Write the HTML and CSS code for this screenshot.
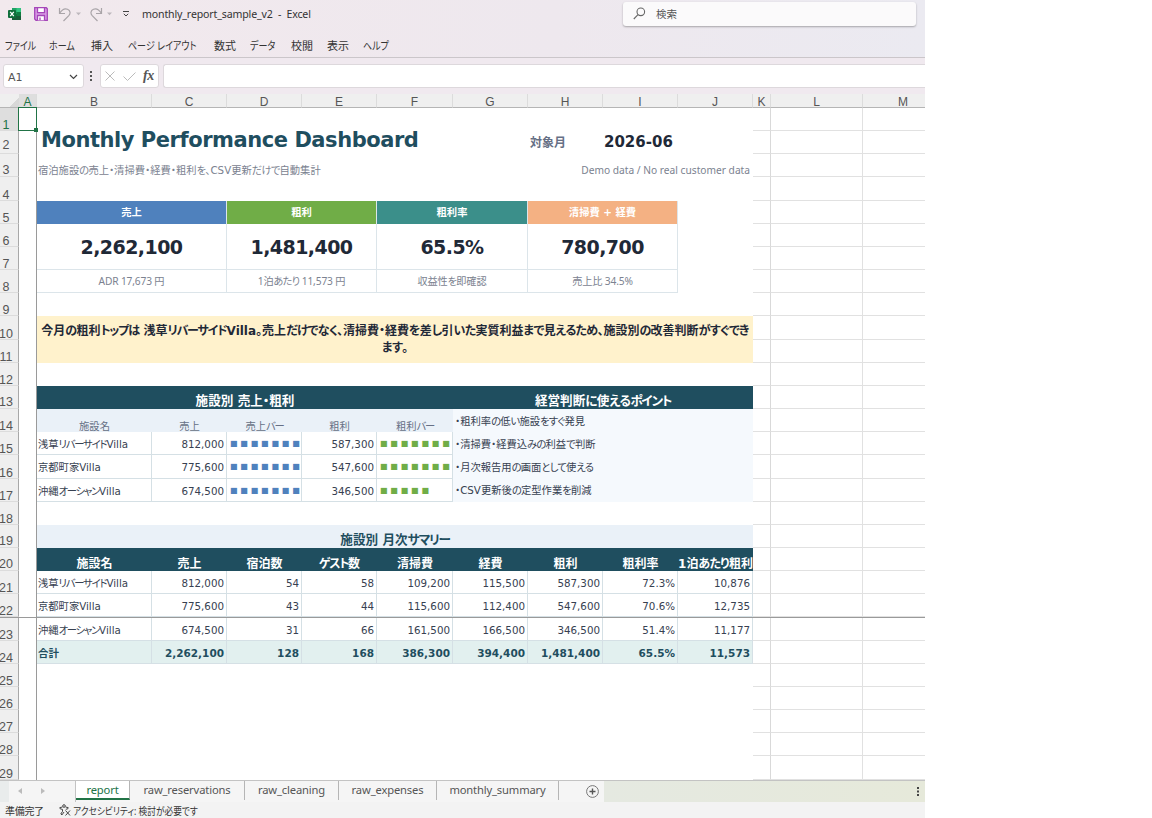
FILE: index.html
```html
<!DOCTYPE html>
<html lang="ja">
<head>
    <meta charset="UTF-8">
    <meta name="viewport" content="width=device-width, initial-scale=1.0">
    <title>monthly_report_sample_v2 - Excel</title>
    <link rel="stylesheet" href="styles.css">
</head>
<body>
    <div class="app">
        <header class="ribbon">
            <div class="title-bar">
                <div class="quick-access">
                    <svg class="icon-excel" width="14" height="14" viewBox="0 0 14 14">
                        <path d="M4 1h9v12H4z" fill="#21a366"/>
                        <path d="M8.500 1H13v4H8.500z" fill="#33c481"/>
                        <path d="M4 7h9v6H4z" fill="#185c37"/>
                        <path d="M8.500 5H13v4H8.500z" fill="#107c41"/>
                        <rect x="0" y="3" width="8" height="8" rx="1" fill="#0f6e3a"/>
                        <path d="M2.200 4.800l3.600 4.400M5.800 4.800L2.200 9.200" stroke="#fff" stroke-width="1.300"/>
                    </svg>
                    <svg class="icon-save" width="14" height="14" viewBox="0 0 14 14" fill="none" stroke="#a546b8" stroke-width="1.300">
                        <path d="M.7.700h11.600l1 1v11.600H2L.7 12z" fill="#d99be6"/>
                        <path d="M3.500.700h7v5h-7z" fill="#fff"/>
                        <path d="M3.500 13.300V8.500h7v4.800" fill="#fff"/>
                        <path d="M6 13v-2.500"/>
                    </svg>
                    <svg class="icon-undo" width="14" height="15" viewBox="0 0 14 15" fill="none" stroke="#a9a4a8" stroke-width="1.200">
                        <path d="M1.500 1v5.500H7M1.700 6.200C4 2.500 7 1.200 9.500 2.200c3 1.200 3.200 4.500 1.300 6.500L5.500 14"/>
                    </svg>
                    <svg class="icon-drop" width="5" height="4" viewBox="0 0 5 4" fill="#bdb7bc"><path d="M0 .5h5L2.500 3.300z"/></svg>
                    <svg class="icon-redo" width="14" height="15" viewBox="0 0 14 15" fill="none" stroke="#a9a4a8" stroke-width="1.200">
                        <path d="M12.500 1v5.500H7M12.300 6.200C10 2.500 7 1.200 4.500 2.200c-3 1.200-3.200 4.500-1.300 6.500L8.500 14"/>
                    </svg>
                    <svg class="icon-drop" width="5" height="4" viewBox="0 0 5 4" fill="#bdb7bc"><path d="M0 .5h5L2.500 3.300z"/></svg>
                    <svg class="icon-more" width="6" height="6" viewBox="0 0 6 6" fill="none" stroke="#444"><path d="M0 .5h6M.8 2.800L3 5l2.200-2.200"/></svg>
                </div>
                <span class="file-name">monthly_report_sample_v2&nbsp; -&nbsp; Excel</span>
                <div class="search-box">
                    <svg width="13" height="13" viewBox="0 0 13 13" fill="none" stroke="#666" stroke-width="1.100">
                        <circle cx="7.800" cy="4.800" r="3.800"/><path d="M5 7.600L.8 12"/>
                    </svg>
                    <span>検索</span>
                </div>
            </div>
            <nav class="menu">
                <span class="menu-file narrow">ファイル</span>
                <span class="menu-home narrow">ホーム</span>
                <span class="menu-insert">挿入</span>
                <span class="menu-layout narrow">ページ レイアウト</span>
                <span class="menu-formula">数式</span>
                <span class="menu-data narrow">データ</span>
                <span class="menu-review">校閲</span>
                <span class="menu-view">表示</span>
                <span class="menu-help narrow">ヘルプ</span>
            </nav>
        </header>

        <div class="formula-bar">
            <div class="name-box">
                <span>A1</span>
                <svg width="9" height="6" viewBox="0 0 9 6" fill="none" stroke="#444" stroke-width="1.200"><path d="M1 1l3.500 3.500L8 1"/></svg>
            </div>
            <svg class="icon-dots" width="2" height="10" viewBox="0 0 2 10" fill="#555"><path d="M0 0h2v2H0zM0 4h2v2H0zM0 8h2v2H0z"/></svg>
            <div class="fx-box">
                <svg width="10" height="10" viewBox="0 0 10 10" fill="none" stroke="#bbb"><path d="M.5.500l9 9M9.500.500l-9 9"/></svg>
                <svg width="13" height="9" viewBox="0 0 13 9" fill="none" stroke="#bbb"><path d="M.5 4.500l4 4L12.500.500"/></svg>
                <span class="fx">fx</span>
            </div>
            <div class="formula-input"></div>
        </div>

        <main class="sheet" id="sheet"></main>

        <footer>
            <div class="tab-bar">
                <div class="tab-nav">
                    <svg width="4" height="6" viewBox="0 0 4 6" fill="#bbb"><path d="M4 0v6L0 3z"/></svg>
                    <svg width="4" height="6" viewBox="0 0 4 6" fill="#bbb"><path d="M0 0v6l4-3z"/></svg>
                </div>
                <div class="tab tab-report active">report</div>
                <div class="tab tab-reservations">raw_reservations</div>
                <div class="tab tab-cleaning">raw_cleaning</div>
                <div class="tab tab-expenses">raw_expenses</div>
                <div class="tab tab-summary">monthly_summary</div>
                <div class="tab-add">
                    <svg width="13" height="13" viewBox="0 0 13 13" fill="none" stroke="#777"><circle cx="6.500" cy="6.500" r="5.900"/><path d="M6.500 3.500v6M3.500 6.500h6" stroke="#555" stroke-width="1.400"/></svg>
                </div>
                <div class="tab-fill">
                    <svg width="2" height="9" viewBox="0 0 2 9" fill="#444"><path d="M0 0h2v2H0zM0 3.500h2v2H0zM0 7h2v2H0z"/></svg>
                </div>
            </div>
            <div class="status-bar">
                <span class="status-ready">準備完了</span>
                <svg width="12" height="12" viewBox="0 0 12 12" fill="none" stroke="#444">
                    <circle cx="5" cy="2" r="1.300"/>
                    <path d="M3.500 3L.8 3.600l.4 1.200 2.300.6v2L1.800 10l1.200.900 2-2.900M6.500 3l2.700.600-.4 1.200-2 .5M6.500 6.500l4.500 5M11 6.500l-4.500 5"/>
                </svg>
                <span class="status-access">アクセシビリティ: 検討が必要です</span>
            </div>
        </footer>
    </div>

    <script src="sheet.js"></script>
</body>
</html>
```

FILE: sheet.js
```js
const sheet = document.getElementById('sheet');
const columns = 'ABCDEFGHIJKLM';
const rowCount = 29;

// grid line 1 is the row/column header
function place(el, range) {
    const [from, to = from] = range.split(':');
    const c1 = columns.indexOf(from[0]) + 2;
    const c2 = columns.indexOf(to[0]) + 3;
    const r1 = Number(from.slice(1)) + 1;
    const r2 = Number(to.slice(1)) + 2;
    el.style.gridArea = `${r1} / ${c1} / ${r2} / ${c2}`;
}

// kana are set tighter than kanji
function tightenKana(text) {
    return text
        .replace(/[\u3041-\u3096]+/g, '<span class="hiragana">$&</span>')
        .replace(/[\u30a1-\u30fa\u30fc]+/g, '<span class="katakana">$&</span>');
}

function addCell(range, className, text = '') {
    const el = document.createElement('div');
    el.className = 'cell ' + className;
    const span = document.createElement('span');
    span.innerHTML = tightenKana(text);
    el.appendChild(span);
    place(el, range);
    sheet.appendChild(el);
}

function addHeader(className, text, row, col) {
    const el = document.createElement('div');
    el.className = className;
    el.textContent = text;
    el.style.gridArea = `${row} / ${col}`;
    sheet.appendChild(el);
}

// headers
addHeader('corner', '', 1, 1);
[...columns].forEach((c, i) => addHeader('col-head col-' + c, c, 1, i + 2));
for (let r = 1; r <= rowCount; r++) {
    addHeader('row-head row-' + r, r, r + 1, 1);
    ['K', 'L', 'M'].forEach(c => addCell(c + r, 'gridline grid-' + c));
}

// title
addCell('B2:G2', 'title', 'Monthly Performance Dashboard');
addCell('H2', 'month-label', '対象月');
addCell('I2', 'month', '2026-06');
addCell('B3:F3', 'subtitle', '宿泊施設の売上・清掃費・経費・粗利を、CSV更新だけで自動集計');
addCell('G3:J3', 'note', 'Demo data / No real customer data');

// KPI cards
const cards = [
    ['B', 'C', 'blue', '売上', '2,262,100', 'ADR 17,673 円'],
    ['D', 'E', 'green', '粗利', '1,481,400', '1泊あたり 11,573 円'],
    ['F', 'G', 'teal', '粗利率', '65.5%', '収益性を即確認'],
    ['H', 'I', 'orange', '清掃費 + 経費', '780,700', '売上比 34.5%']
];
cards.forEach(([a, b, color, label, value, sub]) => {
    addCell(`${a}5:${b}5`, 'kpi-label ' + color, label);
    addCell(`${a}6:${b}7`, 'kpi-value', value);
    addCell(`${a}8:${b}8`, 'kpi-sub', sub);
});

addCell('B10:J11', 'banner', '今月の粗利トップは 浅草リバーサイドVilla。売上だけでなく、清掃費・経費を差し引いた実質利益まで見えるため、施設別の改善判断がすぐでき<br>ます。');

// sales and profit bars
addCell('B13:F13', 'section dark', '施設別 売上・粗利');
addCell('G13:J13', 'section dark', '経営判断に使えるポイント');
['施設名', '売上', '売上バー', '粗利', '粗利バー'].forEach((t, i) => addCell('BCDEF'[i] + '14', 'sub-head', t));
const bars = [
    ['浅草リバーサイドVilla', '812,000', 7, '587,300', 7],
    ['京都町家Villa', '775,600', 7, '547,600', 7],
    ['沖縄オーシャンVilla', '674,500', 7, '346,500', 5]
];
bars.forEach(([name, sales, salesBar, profit, profitBar], i) => {
    const r = 15 + i;
    addCell('B' + r, 'data name', name);
    addCell('C' + r, 'data number', sales);
    addCell('D' + r, 'data bar bar-blue', '■'.repeat(salesBar));
    addCell('E' + r, 'data number', profit);
    addCell('F' + r, 'data bar bar-green', '■'.repeat(profitBar));
});
['・粗利率の低い施設をすぐ発見', '・清掃費・経費込みの利益で判断', '・月次報告用の画面として使える', '・CSV更新後の定型作業を削減']
    .forEach((t, i) => addCell(`G${14 + i}:J${14 + i}`, 'point', t));

// monthly summary
addCell('B19:J19', 'section light', '施設別 月次サマリー');
['施設名', '売上', '宿泊数', 'ゲスト数', '清掃費', '経費', '粗利', '粗利率', '1泊あたり粗利']
    .forEach((t, i) => addCell('BCDEFGHIJ'[i] + '20', 'table-head', t));
const summary = [
    ['浅草リバーサイドVilla', '812,000', '54', '58', '109,200', '115,500', '587,300', '72.3%', '10,876'],
    ['京都町家Villa', '775,600', '43', '44', '115,600', '112,400', '547,600', '70.6%', '12,735'],
    ['沖縄オーシャンVilla', '674,500', '31', '66', '161,500', '166,500', '346,500', '51.4%', '11,177'],
    ['合計', '2,262,100', '128', '168', '386,300', '394,400', '1,481,400', '65.5%', '11,573']
];
summary.forEach((row, i) => {
    const total = i === 3 ? ' total' : '';
    row.forEach((t, j) => addCell('BCDEFGHIJ'[j] + (21 + i), 'data ' + (j ? 'number' : 'name') + total, t));
});

// frozen panes and selection
addCell('A1:A29', 'freeze-col');
const freezeRow = document.createElement('div');
freezeRow.className = 'freeze-row';
sheet.appendChild(freezeRow);
addCell('A1', 'selected');
```

FILE: styles.css
```css
* {
    box-sizing: border-box;
}
body {
    margin: 0;
    background-color: #fff;
    font-family: "Noto Sans", "Noto Sans CJK JP", sans-serif;
    font-size: 11px;
    color: #333;
    font-feature-settings: "palt";
    overflow: hidden;
}
svg {
    display: block;
    flex: none;
}
.app {
    width: 925px;
    height: 818px;
    overflow: hidden;
    white-space: nowrap;
}

/* ribbon */
.ribbon {
    height: 58px;
    background: linear-gradient(90deg, #f2e9ed, #eee8ee 60%, #ebeaf1);
    border-bottom: 1px solid #cbc6ca;
}
.title-bar {
    display: flex;
    align-items: center;
    height: 28px;
}
.quick-access {
    display: flex;
    align-items: center;
    width: 142px;
    padding-left: 8px;
}
.icon-save {
    margin-left: 12px;
}
.icon-undo {
    margin-left: 10px;
}
.icon-drop {
    margin-left: 4px;
}
.icon-redo {
    margin-left: 8px;
}
.icon-more {
    margin-left: 11px;
}
.file-name {
    width: 481px;
    font-size: 10.6px;
    letter-spacing: -0.15px;
}
.search-box {
    display: flex;
    align-items: center;
    gap: 10px;
    width: 293px;
    height: 24px;
    padding: 0 0 2px 10px;
    background-color: #fbfafb;
    border-radius: 3px;
    box-shadow: 0 1px 2px rgba(0, 0, 0, 0.3);
    font-size: 10.5px;
    color: #555;
}
.menu {
    display: flex;
    align-items: center;
    height: 34px;
    padding-left: 5px;
    font-size: 11px;
}
.menu span {
    flex: none;
}
.menu-file { width: 44px; }
.menu-home { width: 42px; }
.menu-insert { width: 37px; }
.menu-layout { width: 86px; }
.menu-formula { width: 36px; }
.menu-data { width: 41px; }
.menu-review { width: 36px; }
.menu-view { width: 36px; }
.narrow {
    transform: scaleX(0.82);
    transform-origin: left;
}

/* formula bar */
.formula-bar {
    display: flex;
    height: 36px;
    padding: 6px 0 6px 3px;
    background-color: #f0e9ef;
}
.name-box, .fx-box, .formula-input {
    height: 24px;
    background-color: #fff;
    border: 1px solid #ddd8dc;
    border-radius: 3px;
}
.name-box {
    display: flex;
    align-items: center;
    justify-content: space-between;
    width: 81px;
    padding: 2px 5px 0 4px;
    font-family: "DejaVu Sans", sans-serif;
    font-size: 11px;
    color: #555;
}
.icon-dots {
    margin: 7px 8px 0 6px;
}
.fx-box {
    display: flex;
    align-items: center;
    gap: 8px;
    width: 59px;
    padding-left: 4px;
}
.fx {
    margin-left: -1px;
    font: italic bold 14px "Liberation Serif", serif;
    color: #555;
    letter-spacing: -0.5px;
}
.formula-input {
    flex: 1;
    margin-left: 4px;
    border-right: none;
    border-radius: 3px 0 0 3px;
}

/* sheet */
.sheet {
    position: relative;
    display: grid;
    grid-template-columns: 19px 18px 115px 75px 75px 75px 76px 75px 75px 75px 75px 18px 92px 62px;
    grid-template-rows: 14px repeat(29, 23.17px);
    height: 686px;
    overflow: hidden;
}
.corner {
    background: linear-gradient(135deg, #efefef 70%, #d8d8d8 70%);
    border-bottom: 1px solid #b5b5b5;
}
.col-head, .row-head {
    font-family: "Liberation Sans", Arial, sans-serif;
    font-size: 12px;
    color: #555;
    background-color: #efefef;
}
.col-head {
    line-height: 16px;
    text-align: center;
    border-right: 1px solid #dcdcdc;
    border-bottom: 1px solid #b5b5b5;
}
.col-A {
    background-color: #dedede;
    color: #217346;
    border-bottom-color: #217346;
}
.col-M {
    padding-left: 18px;
    border-right: none;
}
.row-head {
    display: flex;
    align-items: flex-end;
    justify-content: center;
    padding-right: 6px;
    line-height: 10px;
    font-size: 12.5px;
    border-right: 1px solid #a8a8a8;
    border-bottom: 1px solid #dcdcdc;
}
.row-1 {
    background-color: #dedede;
    color: #217346;
}
.row-2 {
    padding-bottom: 3px;
}
.row-3, .row-13, .row-19, .row-20 {
    padding-bottom: 1px;
}
.cell {
    display: flex;
    align-items: center;
    min-width: 0;
    font-family: "DejaVu Sans", "Noto Sans CJK JP", sans-serif;
    font-size: 10.3px;
    line-height: 14px;
}
.hiragana {
    letter-spacing: -0.75px;
}
.katakana {
    letter-spacing: -1.2px;
}
.gridline {
    border-right: 1px solid #e1e1e1;
    border-bottom: 1px solid #e1e1e1;
}
.grid-K {
    border-right-color: #d9d9d9;
}
.grid-M {
    border-right: none;
}
.title {
    padding-left: 4px;
    padding-bottom: 5px;
    font-size: 21px;
    font-weight: bold;
    letter-spacing: -0.45px;
    color: #1f4e5f;
}
.month-label {
    justify-content: flex-start;
    padding-left: 2px;
    font-size: 12px;
    font-weight: bold;
    color: #667085;
}
.month {
    padding-left: 1px;
    padding-bottom: 2px;
    font-size: 15px;
    font-weight: bold;
    color: #1f2937;
}
.subtitle, .note {
    padding-top: 9px;
    color: #7b8290;
}
.subtitle {
    padding-left: 1px;
}
.note {
    justify-content: flex-end;
    padding-right: 3px;
    font-family: "Noto Sans", sans-serif;
    font-size: 10.2px;
}
.kpi-label, .kpi-value, .kpi-sub {
    justify-content: center;
    border-right: 1px solid #dce5ea;
}
.kpi-label {
    font-weight: bold;
    color: #fff;
}
.blue { background-color: #4f81bd; }
.green { background-color: #70ad47; }
.teal { background-color: #3b8f8a; }
.orange { background-color: #f4b183; }
.kpi-value {
    padding-top: 2px;
    font-size: 19px;
    font-weight: bold;
    letter-spacing: -0.55px;
    color: #1f2937;
    border-bottom: 1px solid #dce5ea;
}
.kpi-sub {
    font-family: "Noto Sans", "Noto Sans CJK JP", sans-serif;
    font-size: 10.2px;
    letter-spacing: -0.15px;
    color: #7b8290;
    border-bottom: 1px solid #dce5ea;
}
.banner {
    justify-content: center;
    text-align: center;
    background-color: #fff2cc;
    font-size: 12px;
    font-weight: bold;
    line-height: 16.5px;
    color: #1f2937;
}
.section {
    justify-content: center;
    padding-top: 8px;
    font-size: 12.6px;
    font-weight: bold;
}
.dark, .table-head {
    background-color: #1f4e5f;
    color: #fff;
}
.light {
    background-color: #eaf1f8;
    color: #1f4e5f;
}
.sub-head {
    justify-content: center;
    padding-top: 10px;
    background-color: #eaf1f8;
    color: #667085;
}
.table-head {
    justify-content: center;
    padding-top: 8px;
    font-size: 12px;
    font-weight: bold;
}
.data {
    padding-top: 2px;
    border-right: 1px solid #d5e0e5;
    border-bottom: 1px solid #d5e0e5;
    color: #374151;
}
.name {
    padding-left: 1px;
}
.number {
    justify-content: flex-end;
    padding-right: 2px;
}
.total {
    background-color: #e2f0ef;
    color: #1f4e5f;
    font-weight: bold;
    font-size: 10.5px;
}
.bar {
    padding-left: 3px;
    font-size: 8px;
    letter-spacing: 2.8px;
    overflow: hidden;
}
.bar-blue { color: #4f81bd; }
.bar-green { color: #70ad47; }
.point {
    padding-left: 2px;
    background-color: #f5f9fd;
    color: #374151;
}
.freeze-col {
    border-right: 1px solid #9a9a9a;
}
.freeze-row {
    position: absolute;
    left: 0;
    right: 0;
    top: 523px;
    height: 1px;
    background-color: #9a9a9a;
}
.selected {
    position: relative;
    margin: -1px 0 0 -1px;
    border: 1px solid #217346;
    outline: 1px solid rgba(33, 115, 70, 0.5);
    outline-offset: -1px;
}
.selected::after {
    content: "";
    position: absolute;
    right: -2px;
    bottom: -2px;
    width: 4px;
    height: 4px;
    background-color: #217346;
}

/* sheet tabs */
.tab-bar {
    display: flex;
    height: 22px;
    background-color: #f5f5f5;
    border-top: 1px solid #c3c3c3;
}
.tab-nav {
    display: flex;
    align-items: center;
    gap: 19px;
    width: 76px;
    padding: 0 0 2px 18px;
    border-right: 1px solid #c3c3c3;
    background: linear-gradient(90deg, #e9ecec 9px, #f5f5f5 9px);
}
.tab {
    height: 19px;
    line-height: 18px;
    text-align: center;
    font-size: 11.2px;
    letter-spacing: -0.15px;
    color: #555;
    border-right: 1px solid #b5b5b5;
}
.active {
    background-color: #fff;
    color: #217346;
    border-bottom: 2px solid #217346;
}
.tab-report { width: 54px; }
.tab-reservations { width: 115px; }
.tab-cleaning { width: 94px; }
.tab-expenses { width: 98px; }
.tab-summary { width: 122px; }
.tab-add {
    display: flex;
    align-items: center;
    width: 45px;
    padding: 0 0 1px 27px;
}
.tab-fill {
    display: flex;
    align-items: center;
    justify-content: flex-end;
    flex: 1;
    padding-right: 6px;
    background: linear-gradient(90deg, #e5e9e1, #e6e9da);
}
.status-bar {
    display: flex;
    align-items: center;
    height: 16px;
    padding-left: 5px;
    background-color: #f3f3f3;
    font-size: 10px;
}
.status-ready {
    width: 54px;
    letter-spacing: -0.3px;
}
.status-access {
    margin-left: 2px;
    transform: scaleX(0.87);
    transform-origin: left;
}
```
